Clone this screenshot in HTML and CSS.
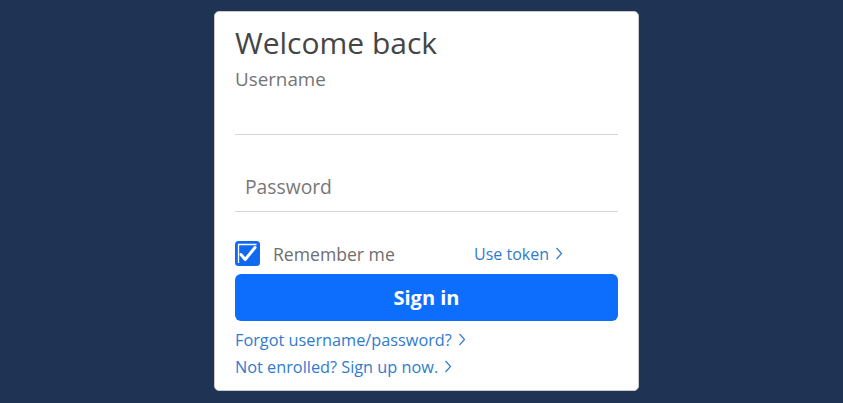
FILE: index.html
```html
<!DOCTYPE html>
<html lang="en">
<head>
<meta charset="utf-8">
<title>Welcome back</title>
<link rel="stylesheet" href="styles.css">
</head>
<body>
<div class="card">
  <h1 class="title">Welcome back</h1>
  <div class="label">Username</div>
  <div class="field field-user"></div>
  <div class="field field-pass"><span class="placeholder">Password</span></div>
  <div class="row">
    <span class="check">
      <svg width="25" height="25" viewBox="0 0 25 25">
        <rect x="0" y="0" width="25" height="25" rx="3.5" fill="#1169f0"/>
        <path d="M3.5 22 V3.5 H21.5" fill="none" stroke="#fff" stroke-width="1.3"/>
        <path d="M6 13.5 L10.2 18.5 L20 6.5" fill="none" stroke="#fff" stroke-width="3" stroke-linecap="round" stroke-linejoin="round"/>
      </svg>
    </span>
    <span class="remember">Remember me</span>
    <a class="link token">Use token <svg class="chev" width="8" height="13" viewBox="0 0 8 13"><path d="M1.5 1 L6.5 6.5 L1.5 12" fill="none" stroke="currentColor" stroke-width="1.2"/></svg></a>
  </div>
  <button class="signin">Sign in</button>
  <div class="links">
    <a class="link">Forgot username/password? <svg class="chev" width="8" height="13" viewBox="0 0 8 13"><path d="M1.5 1 L6.5 6.5 L1.5 12" fill="none" stroke="currentColor" stroke-width="1.2"/></svg></a>
    <a class="link">Not enrolled? Sign up now. <svg class="chev" width="8" height="13" viewBox="0 0 8 13"><path d="M1.5 1 L6.5 6.5 L1.5 12" fill="none" stroke="currentColor" stroke-width="1.2"/></svg></a>
  </div>
</div>
</body>
</html>
```
FILE: styles.css
```css
html, body {
  margin: 0;
  padding: 0;
}
body {
  background: #1f3354;
  font-family: "Open Sans", "Noto Sans", sans-serif;
  height: 403px;
  overflow: hidden;
}
.card {
  box-sizing: border-box;
  width: 425px;
  margin: 11px 0 0 214px;
  background: #fff;
  border: 1px solid #c9c9c9;
  border-radius: 5px;
  padding: 13px 20px 10px 20px;
  display: flex;
  flex-direction: column;
}
.title {
  margin: 0;
  font-size: 30px;
  line-height: 36px;
  font-weight: 400;
  color: #454545;
}
.label {
  margin-top: 6px;
  font-size: 18.8px;
  line-height: 24px;
  color: #747474;
}
.field {
  border-bottom: 1px solid #d6d6d6;
  box-sizing: border-box;
}
.field-user {
  height: 44px;
}
.field-pass {
  margin-top: 26px;
  height: 51px;
  display: flex;
  align-items: center;
  padding: 0 10px;
}
.placeholder {
  font-size: 19.3px;
  color: #777;
}
.row {
  margin-top: 29px;
  height: 25px;
  display: flex;
  align-items: center;
}
.check {
  width: 25px;
  height: 25px;
  display: block;
}
.check svg {
  display: block;
}
.remember {
  margin-left: 13px;
  font-size: 17.6px;
  color: #6e6e6e;
  width: 201px;
}
.link {
  color: #2f7bd0;
  font-size: 16px;
  text-decoration: none;
  display: flex;
  align-items: center;
  gap: 6px;
}
.links .link {
  font-size: 16.3px;
  height: 27px;
}
.chev {
  display: block;
}
.signin {
  margin-top: 8px;
  height: 47px;
  border: none;
  border-radius: 6px;
  background: #0d6efd;
  color: #fff;
  font-family: "Open Sans", "Noto Sans", sans-serif;
  font-size: 20px;
  font-weight: 700;
  padding: 0;
}
.links {
  margin-top: 5px;
  display: flex;
  flex-direction: column;
}
```
